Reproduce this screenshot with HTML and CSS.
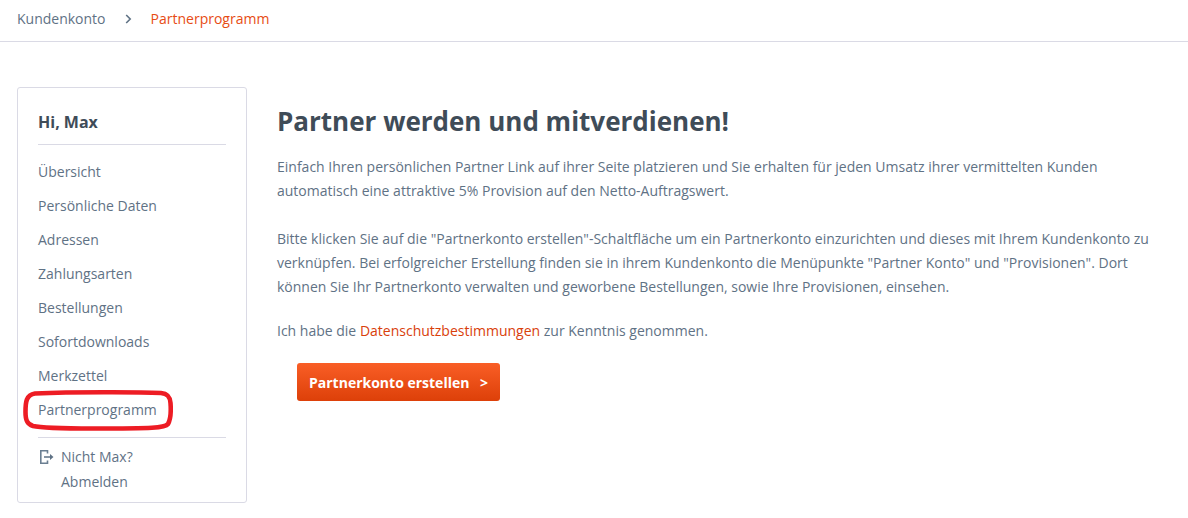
FILE: index.html
```html
<!DOCTYPE html>
<html>
<head>
  <meta charset="UTF-8">
  <meta name="viewport" content="width=device-width, initial-scale=1">
  <link rel="stylesheet" href="styles.css">
</head>
<body>
  <nav class="breadcrumb">
    <a href="#">Kundenkonto</a>
    <svg class="crumb-sep" width="7" height="10" viewBox="0 0 7 10"><path d="M1.2 1 L5.2 5 L1.2 9" fill="none" stroke="#5f7285" stroke-width="1.6"/></svg>
    <a href="#" class="active">Partnerprogramm</a>
  </nav>

  <div class="page">
    <aside class="sidebar">
      <div class="hello">Hi, Max</div>
      <ul class="menu">
        <li><a href="#">Übersicht</a></li>
        <li><a href="#">Persönliche Daten</a></li>
        <li><a href="#">Adressen</a></li>
        <li><a href="#">Zahlungsarten</a></li>
        <li><a href="#">Bestellungen</a></li>
        <li><a href="#">Sofortdownloads</a></li>
        <li><a href="#">Merkzettel</a></li>
        <li class="marked">
          <a href="#">Partnerprogramm</a>
          <svg class="ring" width="150" height="41" viewBox="0 0 150 41">
            <path d="M12 3.5 C50 2 115 2 138 3 C144 3.5 147 6 147.5 13 C148 20 148 29 145 34 C142 38 130 38.5 70 38.5 C40 38.5 18 38 10 36 C4 34 2.5 30 2.5 22 C2.5 12 3 5 12 3.5 Z" fill="none" stroke="#ed1c24" stroke-width="4.6"/>
          </svg>
        </li>
      </ul>
      <div class="logout">
        <svg class="logout-icon" width="16" height="16" viewBox="0 0 16 16">
          <path d="M9.5 4.5 V1.8 H2.8 V14.2 H9.5 V11.5" fill="none" stroke="#6b7f92" stroke-width="1.6"/>
          <path d="M6 7.2 H12 V5 L15.5 8 L12 11 V8.8 H6 Z" fill="#5f7285"/>
        </svg>
        <div class="logout-links">
          <a href="#">Nicht Max?</a>
          <a href="#">Abmelden</a>
        </div>
      </div>
    </aside>

    <main class="content">
      <h1>Partner werden und mitverdienen!</h1>
      <p>Einfach Ihren persönlichen Partner Link auf ihrer Seite platzieren und Sie erhalten für jeden Umsatz ihrer vermittelten Kunden automatisch eine attraktive 5% Provision auf den Netto-Auftragswert.</p>
      <p class="steps">Bitte klicken Sie auf die "Partnerkonto erstellen"-Schaltfläche um ein Partnerkonto einzurichten und dieses mit Ihrem Kundenkonto zu verknüpfen. Bei erfolgreicher Erstellung finden sie in ihrem Kundenkonto die Menüpunkte "Partner Konto" und "Provisionen". Dort können Sie Ihr Partnerkonto verwalten und geworbene Bestellungen, sowie Ihre Provisionen, einsehen.</p>
      <p class="privacy">Ich habe die <a href="#">Datenschutzbestimmungen</a> zur Kenntnis genommen.</p>
      <button class="btn" type="button">Partnerkonto erstellen <span class="btn-arrow">&gt;</span></button>
    </main>
  </div>
</body>
</html>
```
FILE: styles.css
```css
* {
  box-sizing: border-box;
}

body {
  margin: 0;
  font-family: "Open Sans", sans-serif;
  font-size: 14px;
  line-height: 24px;
  color: #5f7285;
  background: #fff;
}

a {
  color: inherit;
  text-decoration: none;
}

.breadcrumb {
  display: flex;
  align-items: center;
  height: 42px;
  padding: 0 17px 4px;
  border-bottom: 1px solid #dadae5;
}

.breadcrumb .active {
  color: #e74c14;
}

.crumb-sep {
  margin: 0 19px 0 19px;
}

.page {
  display: flex;
  align-items: flex-start;
  padding: 45px 17px 0;
}

.sidebar {
  flex: none;
  width: 230px;
  height: 416px;
  padding: 0 20px;
  border: 1px solid #dadae5;
  border-radius: 3px;
}

.hello {
  height: 57px;
  padding-top: 22px;
  border-bottom: 1px solid #dadae5;
  font-size: 16px;
  font-weight: 700;
  color: #3f4c58;
}

.menu {
  margin: 10px 0 0;
  padding: 0;
  list-style: none;
}

.menu li {
  height: 34px;
  line-height: 34px;
}

.marked {
  position: relative;
}

/* hand drawn marker round the last item */
.ring {
  position: absolute;
  left: -15px;
  top: -3px;
}

.logout {
  display: flex;
  margin-top: 10px;
  padding-top: 6px;
  border-top: 1px solid #dadae5;
}

.logout-icon {
  flex: none;
  margin: 5px 7px 0 0;
}

.logout-links a {
  display: block;
  height: 25px;
  line-height: 25px;
}

.content {
  flex: 1;
  padding-left: 30px;
}

h1 {
  margin: 14px 0 14px;
  font-size: 26px;
  line-height: 40px;
  font-weight: 700;
  color: #3f4c58;
}

.content p {
  margin: 0 0 24px;
}

.content .steps {
  margin-bottom: 20px;
}

.content .privacy {
  margin-bottom: 20px;
}

.privacy a {
  color: #d9400b;
}

.btn {
  display: block;
  height: 38px;
  width: 203px;
  margin-left: 20px;
  padding: 0 0 0 12px;
  border: 0;
  border-radius: 3px;
  background: linear-gradient(to bottom, #f95e26, #dd4009);
  color: #fff;
  font-family: inherit;
  font-size: 14px;
  font-weight: 700;
  text-align: left;
  white-space: nowrap;
}

.btn-arrow {
  margin-left: 7px;
}
```
